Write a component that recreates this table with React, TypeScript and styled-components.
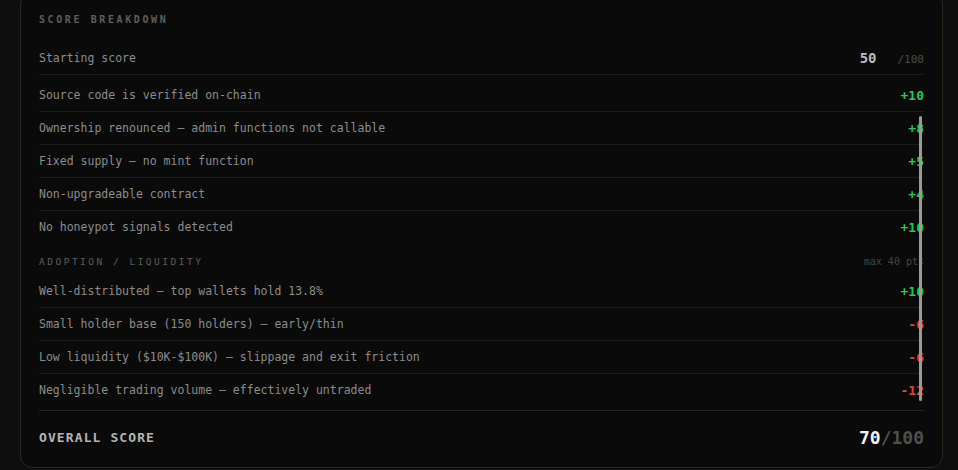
import React from "react";
import styled, { createGlobalStyle } from "styled-components";

const GlobalStyle = createGlobalStyle`
  html, body {
    margin: 0;
    padding: 0;
    background: #0e0e0e;
    overflow: hidden;
  }
`;

type Tone = "pos" | "neg";

interface Item {
  label: string;
  points: number;
}

const trust: Item[] = [
  { label: "Source code is verified on-chain", points: 10 },
  { label: "Ownership renounced — admin functions not callable", points: 8 },
  { label: "Fixed supply — no mint function", points: 5 },
  { label: "Non-upgradeable contract", points: 4 },
  { label: "No honeypot signals detected", points: 10 },
];

const adoption: Item[] = [
  { label: "Well-distributed — top wallets hold 13.8%", points: 10 },
  { label: "Small holder base (150 holders) — early/thin", points: -6 },
  { label: "Low liquidity ($10K-$100K) — slippage and exit friction", points: -6 },
  { label: "Negligible trading volume — effectively untraded", points: -12 },
];

const OVERALL = 70;

const Page = styled.div`
  padding: 0 15px 0 20px;
  margin-top: -8px;
`;

const Card = styled.section`
  position: relative;
  background: #0a0a0a;
  border: 1px solid #29281d;
  border-radius: 12px;
  padding: 20px 18px 18px;
  font-family: "DejaVu Sans Mono", "Liberation Mono", monospace;
`;

const Title = styled.h3`
  margin: 0 0 15px;
  font-size: 10px;
  line-height: 14px;
  font-weight: 700;
  letter-spacing: 2.6px;
  color: #5e5e5e;
  text-transform: uppercase;
`;

const Group = styled.div<{ $gap?: number }>`
  margin-top: ${(p) => p.$gap ?? 0}px;
`;

const Row = styled.div`
  display: flex;
  align-items: center;
  justify-content: space-between;
  height: 32px;
  border-bottom: 1px solid #1b1b1b;

  ${Group} > &:last-child {
    border-bottom: none;
  }
`;

const Label = styled.span`
  font-size: 11.5px;
  color: #8c8c8c;
`;

const Points = styled.span<{ $tone: Tone }>`
  font-size: 13px;
  font-weight: 700;
  color: ${(p) => (p.$tone === "pos" ? "#2fc45c" : "#dd4646")};
`;

const Base = styled.span`
  display: flex;
  align-items: baseline;
  gap: 21px;
`;

const BaseValue = styled.span`
  font-size: 14px;
  font-weight: 700;
  color: #b9b9b9;
`;

const BaseMax = styled.span`
  font-size: 11px;
  color: #4a4a4a;
`;

const SectionHead = styled.div`
  display: flex;
  justify-content: space-between;
  align-items: center;
  padding: 12px 0 6px;
  line-height: 14px;
`;

const SectionName = styled.span`
  font-size: 9.5px;
  letter-spacing: 2.5px;
  color: #5e5e5e;
  text-transform: uppercase;
`;

const SectionMax = styled.span`
  font-size: 10px;
  color: #454545;
`;

const Total = styled.div`
  display: flex;
  justify-content: space-between;
  align-items: center;
  margin-top: 4px;
  padding-top: 16px;
  border-top: 1px solid #242424;
  line-height: 22px;
`;

const TotalLabel = styled.span`
  font-size: 13px;
  font-weight: 700;
  letter-spacing: 1.1px;
  color: #b4b4b4;
`;

const TotalValue = styled.span`
  font-size: 18px;
  font-weight: 700;
  color: #f2f2f2;
`;

const TotalMax = styled.span`
  color: #4f4f4f;
`;

const ScrollThumb = styled.div`
  position: absolute;
  top: 123px;
  right: 20px;
  width: 3px;
  height: 285px;
  border-radius: 2px;
  background: #9a9a9a;
`;

const fmt = (n: number) => (n > 0 ? `+${n}` : `${n}`);

const ScoreRow = ({ item }: { item: Item }) => (
  <Row>
    <Label>{item.label}</Label>
    <Points $tone={item.points >= 0 ? "pos" : "neg"}>{fmt(item.points)}</Points>
  </Row>
);

const App = () => (
  <>
    <GlobalStyle />
    <Page>
      <Card>
        <Title>Score Breakdown</Title>
        <Row>
          <Label>Starting score</Label>
          <Base>
            <BaseValue>50</BaseValue>
            <BaseMax>/100</BaseMax>
          </Base>
        </Row>
        <Group $gap={4}>
          {trust.map((item) => (
            <ScoreRow key={item.label} item={item} />
          ))}
        </Group>
        <SectionHead>
          <SectionName>Adoption / Liquidity</SectionName>
          <SectionMax>max 40 pts</SectionMax>
        </SectionHead>
        <Group>
          {adoption.map((item) => (
            <ScoreRow key={item.label} item={item} />
          ))}
        </Group>
        <Total>
          <TotalLabel>OVERALL SCORE</TotalLabel>
          <TotalValue>
            {OVERALL}
            <TotalMax>/100</TotalMax>
          </TotalValue>
        </Total>
        <ScrollThumb />
      </Card>
    </Page>
  </>
);

export default App;
